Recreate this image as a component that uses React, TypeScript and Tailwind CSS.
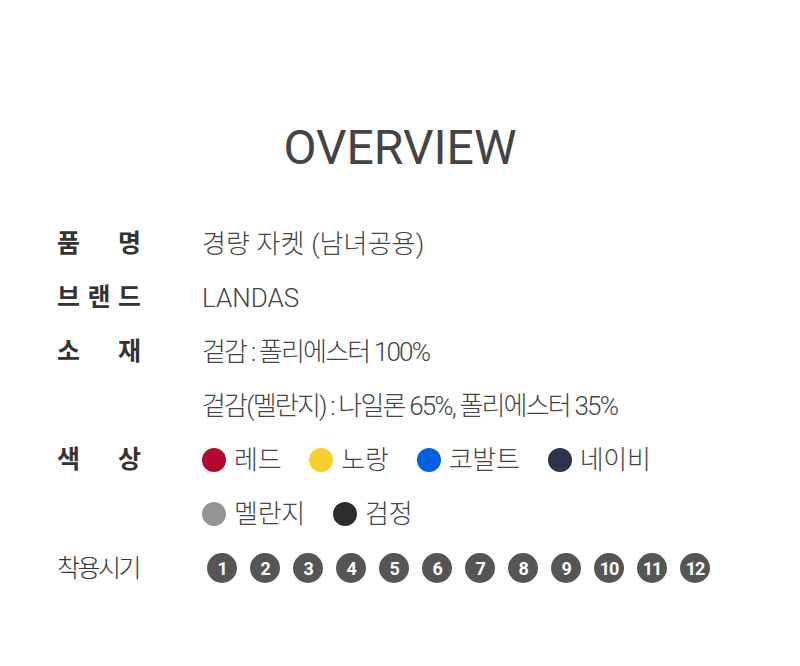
const colors = [
  { name: "레드", hex: "bg-[#b5082f]" },
  { name: "노랑", hex: "bg-[#f7cf2b]" },
  { name: "코발트", hex: "bg-[#0062df]" },
  { name: "네이비", hex: "bg-[#2a3348]" },
  { name: "멜란지", hex: "bg-[#959595]" },
  { name: "검정", hex: "bg-[#2c2c2c]" },
];

const months = [1, 2, 3, 4, 5, 6, 7, 8, 9, 10, 11, 12];

function Label({ chars }: { chars: string[] }) {
  return (
    <div className="flex w-[84px] justify-between text-[25px] font-bold text-[#333]">
      {chars.map((c, i) => (
        <span key={i}>{c}</span>
      ))}
    </div>
  );
}

function Row({ label, children }: { label: React.ReactNode; children: React.ReactNode }) {
  return (
    <div className="flex h-[54px] items-center">
      <div className="w-[145px] shrink-0">{label}</div>
      <div className="flex items-center">{children}</div>
    </div>
  );
}

function Swatch({ name, hex }: { name: string; hex: string }) {
  return (
    <div className="mr-[28px] flex items-center">
      <span className={`h-[24px] w-[24px] rounded-full ${hex}`} />
      <span className="ml-[8px] tracking-[-0.01em]">{name}</span>
    </div>
  );
}

export default function App() {
  return (
    <div
      className="h-[666px] w-[800px] bg-white text-[26px] text-[#444]"
      style={{ fontFamily: "Roboto, 'Noto Sans CJK KR', sans-serif" }}
    >
      <h1 className="pt-[121px] text-center text-[48px] leading-[54px] text-[#444]">OVERVIEW</h1>
      <div className="mt-[42px] pl-[57px] font-light">
        <Row label={<Label chars={["품", "명"]} />}>
          <span className="tracking-[0.005em]">경량 자켓 (남녀공용)</span>
        </Row>
        <Row label={<Label chars={["브", "랜", "드"]} />}>LANDAS</Row>
        <Row label={<Label chars={["소", "재"]} />}>
          <span className="tracking-[-0.07em]">겉감 : 폴리에스터 100%</span>
        </Row>
        <Row label={null}>
          <span className="tracking-[-0.07em]">겉감(멜란지) : 나일론 65%, 폴리에스터 35%</span>
        </Row>
        <Row label={<Label chars={["색", "상"]} />}>
          {colors.slice(0, 4).map((c) => (
            <Swatch key={c.name} {...c} />
          ))}
        </Row>
        <Row label={null}>
          {colors.slice(4).map((c) => (
            <Swatch key={c.name} {...c} />
          ))}
        </Row>
        <Row label={<span className="text-[25px] tracking-[-0.1em] text-[#333]">착용시기</span>}>
          <div className="ml-[5px] flex gap-[13px]">
            {months.map((m) => (
              <span
                key={m}
                className="flex h-[30px] w-[30px] items-center justify-center rounded-full bg-[#555] text-[18px] font-bold tracking-[-0.06em] text-white"
              >
                {m}
              </span>
            ))}
          </div>
        </Row>
      </div>
    </div>
  );
}
